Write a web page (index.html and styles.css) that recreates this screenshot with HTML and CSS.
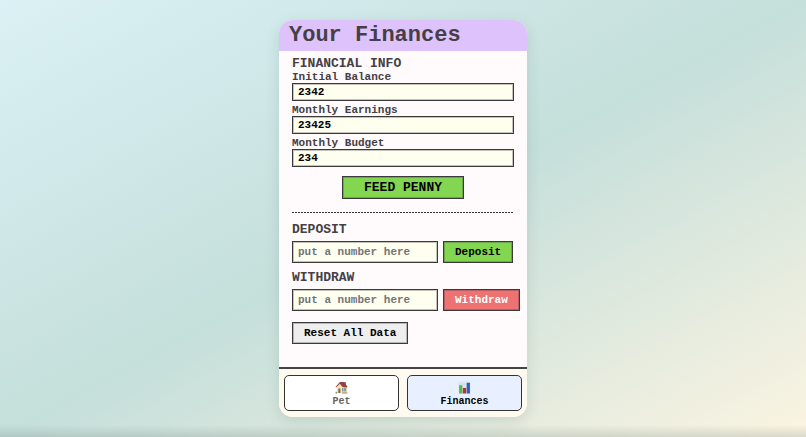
FILE: index.html
```html
<!DOCTYPE html>
<html lang="en">
<head>
<meta charset="utf-8">
<meta name="viewport" content="width=device-width, initial-scale=1">
<title>Your Finances</title>
<link rel="stylesheet" href="styles.css">
</head>
<body>
<div class="app">
  <header class="app-header"><h1>Your Finances</h1></header>
  <main class="content">
    <form class="info">
      <h2>FINANCIAL INFO</h2>
      <label for="balance">Initial Balance</label>
      <input id="balance" class="field" type="text" inputmode="numeric" value="2342">
      <label for="earnings">Monthly Earnings</label>
      <input id="earnings" class="field" type="text" inputmode="numeric" value="23425">
      <label for="budget">Monthly Budget</label>
      <input id="budget" class="field" type="text" inputmode="numeric" value="234">
      <button class="btn btn-green btn-feed" type="button">FEED PENNY</button>
    </form>
    <hr class="divider">
    <section class="transfer">
      <h2><label for="deposit">DEPOSIT</label></h2>
      <div class="row">
        <input id="deposit" class="field amount" type="text" inputmode="numeric" placeholder="put a number here">
        <button class="btn btn-green" type="button">Deposit</button>
      </div>
    </section>
    <section class="transfer">
      <h2><label for="withdraw">WITHDRAW</label></h2>
      <div class="row">
        <input id="withdraw" class="field amount" type="text" inputmode="numeric" placeholder="put a number here">
        <button class="btn btn-red" type="button">Withdraw</button>
      </div>
    </section>
    <button class="btn btn-grey" type="button">Reset All Data</button>
  </main>
  <nav class="tabs">
    <button class="tab" type="button">
      <svg class="icon" viewBox="0 0 24 24" aria-hidden="true">
        <path d="M17 2h3v7h-3z" fill="#9b4b43"/>
        <path d="M4 10l6-7 12 8v11H4z" fill="#e9cfa0"/>
        <path d="M4 11l5-6 5 7v10H4z" fill="#f7e3bd"/>
        <path d="M1 11L9 2h7l7 8-1 2-8-1-5-6-7 7z" fill="#963f3b"/>
        <path d="M6 14h4v8H6z" fill="#8a6a55"/>
        <path d="M13 13h7v6h-7z" fill="#7f92a0"/>
        <path d="M16 13v6" stroke="#f4eee0" fill="none"/>
        <path d="M1 20h3v3H1zM13 21h10v2H13z" fill="#8a9a5c"/>
      </svg>
      <span>Pet</span>
    </button>
    <button class="tab active" type="button" aria-current="page">
      <svg class="icon" viewBox="0 0 24 24" aria-hidden="true">
        <path d="M1 1h22v22H1z" fill="#dbe8ee"/>
        <path d="M1 6h22M1 12h22M1 18h22" stroke="#c6d7e0" fill="none"/>
        <path d="M2 8h6v15H2z" fill="#5fb548"/>
        <path d="M9 13h6v10H9z" fill="#b5343a"/>
        <path d="M16 3h6v20h-6z" fill="#2f5fb8"/>
      </svg>
      <span>Finances</span>
    </button>
  </nav>
</div>
</body>
</html>
```
FILE: styles.css
```css
* { box-sizing: border-box; }

body {
  margin: 0;
  min-height: 100vh;
  padding: 20px;
  display: flex;
  justify-content: center;
  background: linear-gradient(to top, rgba(90, 110, 105, 0.2), transparent 12px),
    linear-gradient(to bottom right, #dbf1f5, #c5dfdb 50%, #fbf4e1);
  color: #444045;
  font: bold 11px/14px "Liberation Mono", monospace;
}

.app {
  width: 100%;
  max-width: 248px;
  display: flex;
  flex-direction: column;
  overflow: hidden;
  border-radius: 14px;
  background: #fffafc;
  box-shadow: 0 4px 14px rgba(60, 100, 90, 0.16);
}

.app-header {
  padding: 4px 10px 3px;
  background: #dec2fb;
}

h1 { margin: 0; font-size: 22px; line-height: 24px; }
h2 { margin: 0; font-size: 13px; line-height: 14px; }

.content {
  flex: 1;
  padding: 6px 13px 23px;
  display: flex;
  flex-direction: column;
  align-items: flex-start;
}

.info {
  width: 100%;
  display: flex;
  flex-direction: column;
}

.field {
  width: 100%;
  height: 18px;
  margin: 0 0 3px;
  padding: 0 5px;
  border: 1px solid #3c393d;
  outline: 1px solid rgba(60, 57, 61, 0.3);
  outline-offset: -2px;
  border-radius: 0;
  background: #fffff0;
  color: #000;
  font: inherit;
}

.field::placeholder { color: #757575; opacity: 1; }

.info label { line-height: 12px; }

.btn {
  flex: none;
  height: 22px;
  padding: 0 11px;
  border: 1px solid #3c393d;
  outline: 1px solid rgba(60, 57, 61, 0.3);
  outline-offset: -2px;
  border-radius: 0;
  color: #000;
  font: inherit;
}

.btn-green { background: #83d650; }
.btn-red { background: #ee7272; color: #fff; }
.btn-grey { background: #eee; }

.btn-feed {
  align-self: center;
  height: 23px;
  margin-top: 6px;
  padding: 0 21px;
  font-size: 13px;
}

.divider {
  width: 100%;
  height: 1px;
  margin: 13px 0 10px;
  border: 0;
  background: repeating-linear-gradient(to right, #333 0 2px, transparent 2px 3px);
}

.transfer { width: 100%; margin-bottom: 8px; }

.transfer + .btn { margin-top: 3px; }

.row {
  display: flex;
  gap: 5px;
  margin-top: 4px;
}

.amount {
  flex: none;
  width: 146px;
  height: 22px;
  margin: 0;
}

.tabs {
  display: grid;
  grid-template-columns: 1fr 1fr;
  gap: 8px;
  padding: 6px 5px;
  border-top: 2px solid #444;
  background: #fffaf0;
}

.tab {
  height: 36px;
  padding: 5px 0 0;
  display: flex;
  flex-direction: column;
  align-items: center;
  gap: 2px;
  border: 1px solid #333;
  border-radius: 5px;
  background: #fff;
  color: #666;
  font: bold 10px/12px "Liberation Mono", monospace;
}

.tab.active { background: #e8f0ff; color: #000; }

.icon { width: 13px; height: 13px; }
```
